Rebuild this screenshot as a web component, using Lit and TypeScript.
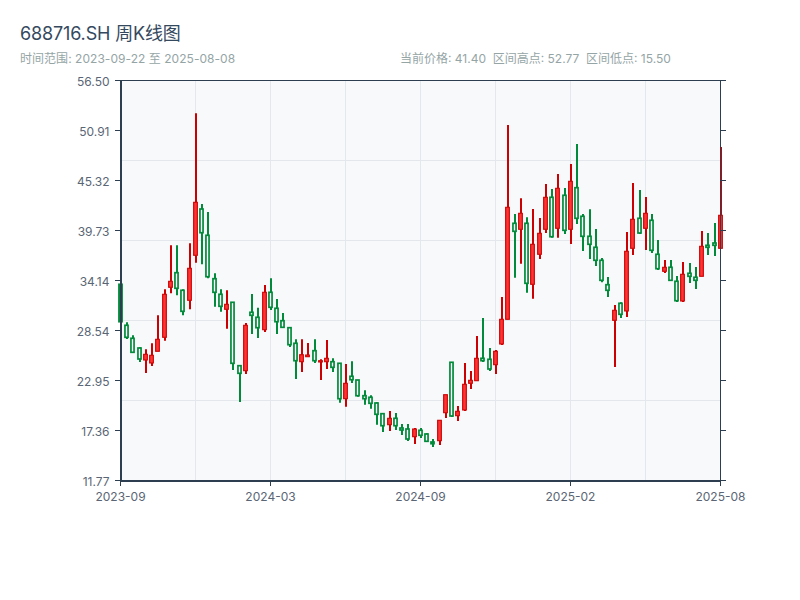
import { LitElement, html, svg, css } from "lit";
import { customElement } from "lit/decorators.js";

// [type, wickTop, bodyTop, bodyBottom, wickBottom]; type 1 = red, 0 = green
const D: number[][] = [
  [0,284.3,284.3,321.7,321.7],[0,322.3,325.3,337.3,339],[0,335.3,338.3,352.3,352.3],[0,347.3,348,359,362],
  [1,349.3,354.3,360,373],[1,343.3,355.3,363,366],[1,315.3,339.3,351.3,351.3],[1,289.3,294.3,337.3,340.7],
  [1,245.3,281.3,287.3,293.3],[0,245.3,272.7,288.3,295.3],[0,289.3,290.3,311.3,315.3],[1,243.3,268.3,300.3,309.3],
  [1,113.3,202.3,255.3,262.7],[0,204,209,232.7,264.3],[0,212,235.3,276.7,278.3],[0,273.3,278.7,292.3,306.7],
  [0,289.3,294.3,306.3,311.7],[1,290.3,304.3,309.3,328.7],[0,302.3,302.3,363.3,370],[0,365.7,365.7,373.3,402],
  [1,323,325.3,370.7,374],[0,294,312.3,315.3,334],[0,307.7,317.3,327.7,338],[1,285,292.3,329.7,332],
  [0,278.3,292.3,307.3,310],[0,299,308.3,321.7,334],[0,313,320.7,327.3,327.3],[0,327.7,327.7,344.7,347],
  [0,339.3,343.3,360.7,379],[1,339.3,354.7,361.7,372],[1,343,355,356.7,356.7],[0,339.3,350.7,360.7,363],
  [1,359.3,360.7,362,380],[1,340,358.3,361.7,369],[0,358.3,361.7,367.3,372],[0,363.3,363.3,398.7,402.7],
  [1,364,383.3,398.7,406.7],[0,361.3,376.3,379.7,383],[0,380,380,395.7,396.7],[0,390.3,395.7,398.7,404.7],
  [0,395.3,397.3,403.3,408.7],[0,402.3,403,414.3,424.7],[0,413.7,413.7,425.7,432],[1,411,418.3,424.7,431],
  [0,413,418.3,425.7,430],[0,424,428,430,435],[0,424,429,439,441],[1,428,429,436.7,444],
  [0,428,430.3,435.3,438],[0,433.3,434,441.3,441.3],[0,439,442,443.7,447],[1,420.3,420.3,440.7,445],
  [1,394.7,394.7,412.7,418],[0,362.3,362.3,416,417],[1,406,411.3,415.7,421],[1,363,384.3,410,411],
  [1,371,380.3,383.3,389],[1,336,358.3,380.7,380.7],[0,318,358.3,360.7,362],[0,348,359.3,369,371],
  [1,350,351.3,364.7,374],[1,297,319.3,344,345],[1,125,207.3,319.3,319.3],[0,214,223.3,231.3,277.7],
  [1,198.3,213.3,229.3,263.7],[0,217.3,223.3,283.3,292.7],[1,209,244.3,284.3,298.7],[1,218,233.3,254.3,259],
  [1,184,197.3,229.3,233],[0,189,197.3,236.7,237.7],[1,174,188.3,228.3,237.7],[0,188,195.3,230.3,234],
  [1,164,181.3,229.3,244],[0,144,187.7,218.3,224],[0,214,216.3,236.3,251],[0,209.3,236.3,244.3,259],
  [0,229,247.3,260.3,266],[0,258,260.3,280.3,282.3],[0,277,284.7,290.3,297],[1,305,310.3,320.3,367],
  [0,302.3,303.3,314.3,318],[1,232,251.3,311,317],[1,183,219.3,248.3,255],[0,190,218.3,233,234],
  [1,197,213.3,228.3,250],[0,214,220.3,250.3,253],[0,240,254.3,268.7,270],[1,260,267.3,271.3,273],
  [0,260,267.3,280.3,280.3],[0,276,281.3,300.7,302],[1,262,274.3,301,302],[0,263,273.3,276.3,283],
  [0,267,277.3,280.3,289],[1,231,246.3,276.3,276.3],[0,233,245.3,247.3,255],[0,223,243,245.3,256],
  [1,147,215.3,248.3,248.3],
];

const Y_LABELS = ["56.50", "50.91", "45.32", "39.73", "34.14", "28.54", "22.95", "17.36", "11.77"];
const X_LABELS = ["2023-09", "2024-03", "2024-09", "2025-02", "2025-08"];

@customElement("app-root")
export class AppRoot extends LitElement {
  static styles = css`
    :host {
      display: block;
      width: 800px;
      height: 600px;
      background: #fff;
      font-family: "Inter", "Noto Sans CJK SC", sans-serif;
      box-sizing: border-box;
      padding: 23px 0 0 20px;
    }
    .title {
      font-size: 18px;
      line-height: 22px;
      color: #34495e;
      font-weight: 400;
      letter-spacing: -0.15px;
    }
    .sub {
      display: flex;
      margin-top: 7px;
      font-size: 12px;
      line-height: 14px;
      color: #95a5a6;
    }
    .range { width: 380px; letter-spacing: 0.04px; }
    .stats { display: flex; gap: 6.7px; }
    svg { display: block; margin: 9px 0 0 -20px; }
    .grid { stroke: #e4e7ec; stroke-width: 1; fill: none; }
    .plot { fill: #f8f9fb; }
    .axis { stroke: #2c3e50; fill: none; }
    .lab { font-size: 12px; fill: #5a6675; font-family: "Inter", sans-serif; }
    .r { stroke: #cc0000; fill: #ff3333; }
    .g { stroke: #008a3a; fill: #ffffff; }
    .gs { stroke: #008a3a; fill: #008a3a; }
    .w { fill: none; stroke-width: 2; }
    .br { stroke-width: 1.1; }
    .bg { stroke-width: 1.7; }
  `;

  private candle(d: number[], i: number) {
    const [t, wt, bt, bb, wb] = d;
    const cx = Math.floor(120.25 + 6.25 * i) + 1;
    const cls = t ? "r" : i === 0 ? "gs" : "g";
    const w = t ? 3.7 : 3.1;
    return svg`
      <path class="w ${cls}" d="M${cx} ${wt}V${bt}M${cx} ${bb}V${wb}"></path>
      <rect class="${t ? "br" : "bg"} ${cls}" x=${cx - 0.5 - w / 2} y=${bt} width=${w} height=${Math.max(bb - bt, 1)}></rect>
    `;
  }

  render() {
    const ys = Y_LABELS.map((_, i) => 81 + i * 50);
    const xs = X_LABELS.map((_, i) => 120.5 + i * 150);
    return html`
      <div class="title">688716.SH 周K线图</div>
      <div class="sub">
        <div class="range">时间范围: 2023-09-22 至 2025-08-08</div>
        <div class="stats">
          <span>当前价格: 41.40</span><span>区间高点: 52.77</span><span>区间低点: 15.50</span>
        </div>
      </div>
      <svg width="800" height="525" viewBox="0 75 800 525">
        <rect class="plot" x="120" y="81" width="600" height="400"></rect>
        ${[195, 270, 345, 420, 495, 570, 645].map(
          (x) => svg`<line class="grid" x1=${x + 0.5} x2=${x + 0.5} y1="81" y2="481"></line>`
        )}
        ${[160, 240, 320, 400].map(
          (y) => svg`<line class="grid" x1="121" x2="720" y1=${y + 0.5} y2=${y + 0.5}></line>`
        )}
        ${D.map((d, i) => this.candle(d, i))}
        <line class="axis" stroke-width="1" x1="120" x2="726" y1="80.5" y2="80.5"></line>
        <line class="axis" stroke-width="2" x1="120" x2="721" y1="481" y2="481"></line>
        <line class="axis" stroke-width="2" x1="121" x2="121" y1="80" y2="482"></line>
        <line class="axis" stroke-width="1" x1="720.5" x2="720.5" y1="80" y2="482"></line>
        ${ys.map(
          (y) => svg`
            <line class="axis" stroke-width="1" x1="115" x2="120" y1=${y - 0.5} y2=${y - 0.5}></line>
            <line class="axis" stroke-width="1" x1="721" x2="726" y1=${y - 0.5} y2=${y - 0.5}></line>
          `
        )}
        ${xs.map(
          (x) => svg`<line class="axis" stroke-width="1" x1=${x} x2=${x} y1="482" y2="486"></line>`
        )}
        ${Y_LABELS.map(
          (l, i) => svg`<text class="lab" x="109.5" y=${ys[i]} text-anchor="end" dominant-baseline="central">${l}</text>`
        )}
        ${X_LABELS.map(
          (l, i) => svg`<text class="lab" x=${xs[i]} y="501" text-anchor="middle">${l}</text>`
        )}
      </svg>
    `;
  }
}
